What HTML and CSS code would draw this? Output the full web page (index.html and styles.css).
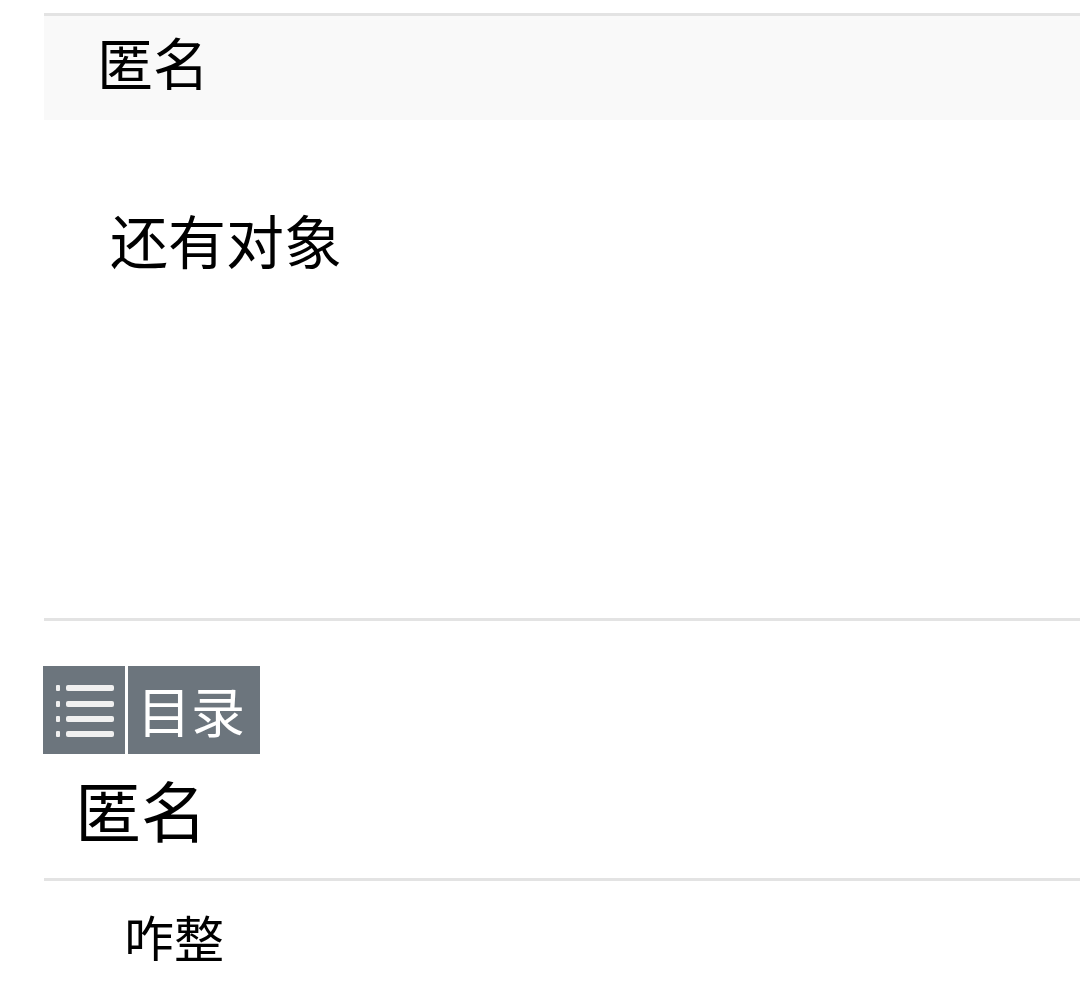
FILE: index.html
```html
<!DOCTYPE html>
<html lang="zh-CN">
<head>
<meta charset="utf-8">
<title>匿名</title>
<link rel="stylesheet" href="styles.css">
</head>
<body>
<div class="page">
  <div class="card-head">
    <div class="author">匿名</div>
  </div>
  <div class="card-body">
    <div class="post-text">还有对象</div>
  </div>
  <div class="divider"></div>
  <div class="toc">
    <div class="toc-icon">
      <svg width="82" height="88" viewBox="0 0 82 88">
        <g fill="#f0f0f0">
          <rect x="13" y="19" width="4" height="6" rx="1"/>
          <rect x="13" y="35" width="4" height="6" rx="1"/>
          <rect x="13" y="50" width="4" height="6" rx="1"/>
          <rect x="13" y="65" width="4" height="6" rx="1"/>
          <rect x="23" y="19" width="48" height="6" rx="2"/>
          <rect x="23" y="35" width="48" height="6" rx="2"/>
          <rect x="23" y="50" width="48" height="6" rx="2"/>
          <rect x="23" y="65" width="48" height="6" rx="2"/>
        </g>
      </svg>
    </div>
    <div class="toc-label">目录</div>
  </div>
  <div class="section-title">匿名</div>
  <div class="divider"></div>
  <div class="reply-text">咋整</div>
</div>
</body>
</html>
```

FILE: styles.css
```css
html, body {
  margin: 0;
  padding: 0;
  background: #ffffff;
}
body {
  font-family: "Noto Sans CJK SC", "Noto Sans", sans-serif;
  color: #000;
  overflow: hidden;
}
.page {
  padding-top: 13px;
  padding-left: 44px;
}
.card-head {
  border-top: 3px solid #e3e3e3;
  background: #f9f9f9;
  height: 104px;
  display: flex;
  align-items: center;
  padding-left: 53px;
}
.author {
  font-size: 56px;
  line-height: 1;
  margin-top: -14px;
}
.card-body {
  height: 498px;
  padding-left: 66px;
}
.post-text {
  font-size: 58px;
  line-height: 1;
  padding-top: 90px;
}
.divider {
  height: 3px;
  background: #e3e3e3;
}
.toc {
  display: flex;
  margin-top: 45px;
  margin-left: -1px;
  height: 88px;
}
.toc-icon {
  width: 82px;
  height: 88px;
  background: #6c757d;
}
.toc-icon svg {
  display: block;
}
.toc-label {
  margin-left: 3px;
  width: 132px;
  height: 88px;
  background: #6c757d;
  color: #fff;
  font-size: 54px;
  line-height: 88px;
  padding-left: 9px;
  box-sizing: border-box;
}
.section-title {
  font-size: 66px;
  line-height: 1;
  margin-left: 31px;
  margin-top: 21px;
  height: 103px;
}
.reply-text {
  font-size: 50px;
  line-height: 1;
  margin-left: 80px;
  margin-top: 30px;
}
```
